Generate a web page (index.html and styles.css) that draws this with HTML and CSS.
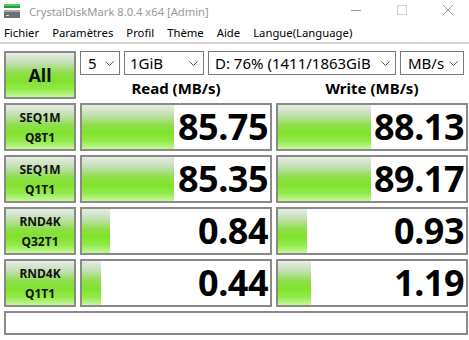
FILE: index.html
```html
<html>
  <head>
    <title>CrystalDiskMark 8.0.4 x64 [Admin]</title>
    <link rel="stylesheet" href="styles.css">
  </head>

  <body>
    <div class="titlebar">
      <svg class="appIcon" width="16" height="14" viewBox="0 0 16 14">
        <rect x="0" y="0" width="16" height="2" fill="#4fd34f"/>
        <rect x="0" y="2" width="16" height="2" fill="#2a9a3a"/>
        <rect x="0" y="6" width="16" height="2" fill="#a8a8a8"/>
        <rect x="0" y="8" width="16" height="6" fill="#6f6f6f"/>
        <rect x="2" y="11" width="3" height="1" fill="#d8d8d8"/>
      </svg>
      <span class="title">CrystalDiskMark 8.0.4 x64 [Admin]</span>
      <div class="controls">
        <svg width="46" height="22" viewBox="0 0 46 22"><line x1="18" y1="10.5" x2="28" y2="10.5" stroke="#9a9a9a" stroke-width="1"/></svg>
        <svg width="46" height="22" viewBox="0 0 46 22"><rect x="18.5" y="5.5" width="9" height="9" fill="none" stroke="#cfcfcf" stroke-width="1"/></svg>
        <svg width="46" height="22" viewBox="0 0 46 22"><path d="M18 5 L28 15 M28 5 L18 15" stroke="#9a9a9a" stroke-width="1"/></svg>
      </div>
    </div>

    <div class="menubar">
      <span>Fichier</span>
      <span>Paramètres</span>
      <span>Profil</span>
      <span>Thème</span>
      <span>Aide</span>
      <span>Langue(Language)</span>
    </div>

    <div class="board">
      <div class="btn all">All</div>

      <div class="top">
        <div class="combos">
          <div class="combo count"><span>5</span><svg width="9" height="5" viewBox="0 0 9 5"><path d="M0.5 0.5 L4.5 4.5 L8.5 0.5" fill="none" stroke="#555"/></svg></div>
          <div class="combo size"><span>1GiB</span><svg width="9" height="5" viewBox="0 0 9 5"><path d="M0.5 0.5 L4.5 4.5 L8.5 0.5" fill="none" stroke="#555"/></svg></div>
          <div class="combo drive"><span>D: 76% (1411/1863GiB</span><svg width="9" height="5" viewBox="0 0 9 5"><path d="M0.5 0.5 L4.5 4.5 L8.5 0.5" fill="none" stroke="#555"/></svg></div>
          <div class="combo unit"><span>MB/s</span><svg width="9" height="5" viewBox="0 0 9 5"><path d="M0.5 0.5 L4.5 4.5 L8.5 0.5" fill="none" stroke="#555"/></svg></div>
        </div>
        <div class="heads">
          <div>Read (MB/s)</div>
          <div>Write (MB/s)</div>
        </div>
      </div>

      <div class="btn test">SEQ1M<br>Q8T1</div>
      <div class="cell"><div class="bar" style="width: 92px"></div><span class="val">85.75</span></div>
      <div class="cell"><div class="bar" style="width: 93px"></div><span class="val">88.13</span></div>

      <div class="btn test">SEQ1M<br>Q1T1</div>
      <div class="cell"><div class="bar" style="width: 92px"></div><span class="val">85.35</span></div>
      <div class="cell"><div class="bar" style="width: 93px"></div><span class="val">89.17</span></div>

      <div class="btn test">RND4K<br>Q32T1</div>
      <div class="cell"><div class="bar" style="width: 28px"></div><span class="val">0.84</span></div>
      <div class="cell"><div class="bar" style="width: 29px"></div><span class="val">0.93</span></div>

      <div class="btn test">RND4K<br>Q1T1</div>
      <div class="cell"><div class="bar" style="width: 19px"></div><span class="val">0.44</span></div>
      <div class="cell"><div class="bar" style="width: 33px"></div><span class="val">1.19</span></div>

      <div class="status"></div>
    </div>
  </body>
</html>
```

FILE: styles.css
```css
*, *:before, *:after {
  box-sizing: border-box;
  padding: 0;
  margin: 0;
}

body {
  width: 469px;
  height: 340px;
  background: #fff;
  font-family: "Noto Sans", "Open Sans", sans-serif;
  color: #000;
  overflow: hidden;
}

.titlebar {
  display: flex;
  align-items: center;
  height: 22px;
  padding-left: 4px;
}

.appIcon {
  flex: none;
}

.title {
  margin-left: 9px;
  font-size: 11.2px;
  color: #999;
}

.controls {
  display: flex;
  margin-left: auto;
  margin-right: -2px;
}

.controls svg {
  display: block;
}

.menubar {
  display: flex;
  align-items: center;
  gap: 13px;
  height: 22px;
  padding-left: 4px;
  font-size: 11.3px;
  border-bottom: 2px solid #d4d4d4;
}

.board {
  display: grid;
  grid-template-columns: 72px 192px 192px;
  grid-template-rows: 48px 48px 48px 48px 48px 24px;
  gap: 4px;
  padding: 7px 0 0 4px;
}

.btn {
  display: flex;
  align-items: center;
  justify-content: center;
  text-align: center;
  font-weight: bold;
  border: 2px solid #8a8a8a;
  background: linear-gradient(to bottom, #e6ece3 0%, #c4dfb6 22%, #8fdf4c 45%, #80e22c 62%, #92ea4a 82%, #c6f79c 100%);
  color: #111;
}

.all {
  font-size: 18px;
}

.test {
  font-size: 12px;
  line-height: 20px;
  padding-top: 1px;
}

.top {
  grid-column: 2 / 4;
  display: flex;
  flex-direction: column;
}

.combos {
  display: flex;
  gap: 4px;
  height: 24px;
}

.combo {
  display: flex;
  align-items: center;
  justify-content: space-between;
  border: 1px solid #7a7a7a;
  padding: 0 5px 0 7px;
  font-size: 15px;
  white-space: nowrap;
  overflow: hidden;
}

.combo svg {
  flex: none;
  margin-left: 4px;
}

.count {
  width: 40px;
}

.size {
  width: 80px;
  padding-left: 5px;
}

.drive {
  width: 188px;
  padding-left: 6px;
}

.unit {
  width: 64px;
}

.heads {
  display: grid;
  grid-template-columns: 192px 192px;
  gap: 4px;
  flex: 1;
  align-items: center;
  font-size: 15px;
  font-weight: bold;
  text-align: center;
  padding-top: 2px;
}

.cell {
  display: grid;
  border: 2px solid #8a8a8a;
  background: #fff;
}

.bar {
  grid-area: 1 / 1;
  justify-self: start;
  height: 100%;
  background: linear-gradient(to bottom, #e6ece3 0%, #c4dfb6 22%, #8fdf4c 45%, #80e22c 62%, #92ea4a 82%, #c6f79c 100%);
}

.val {
  grid-area: 1 / 1;
  justify-self: end;
  align-self: center;
  padding-right: 2px;
  font-size: 36px;
  font-weight: bold;
  line-height: 40px;
  letter-spacing: -0.5px;
}

.status {
  grid-column: 1 / 4;
  border: 2px solid #8a8a8a;
  background: #fff;
}
```
